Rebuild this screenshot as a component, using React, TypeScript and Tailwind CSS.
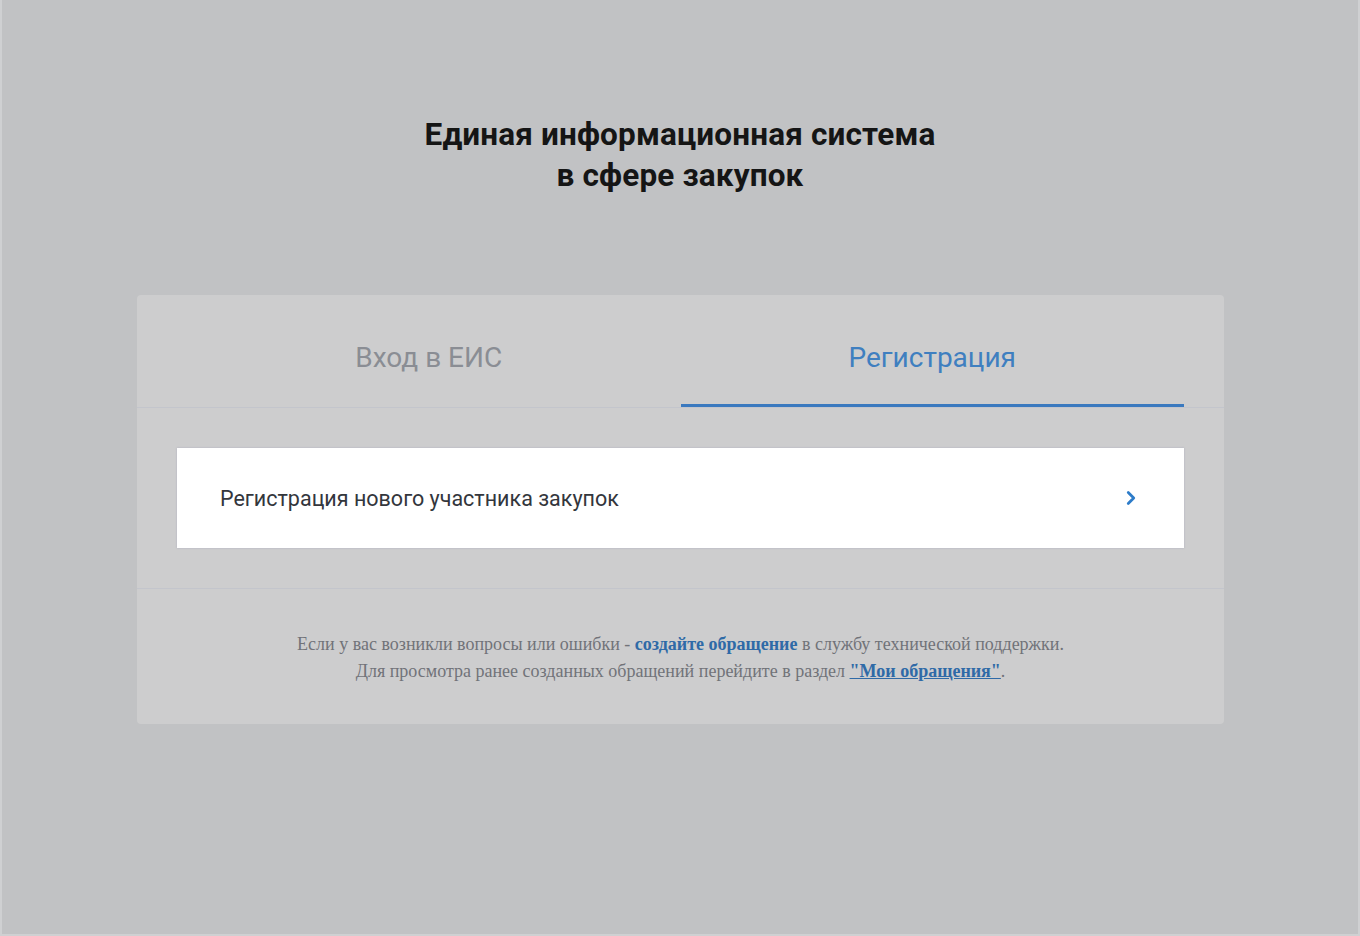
import { ChevronRight } from 'lucide-react';

const App = () => {
  return (
    <div className="min-h-[936px] w-full bg-[#c1c2c4] font-['Roboto',sans-serif] border-l-2 border-b-2 border-r-2 border-[#cfd0d2]">
      <div className="flex flex-col items-center pt-[114px]">
        <h1 className="text-center text-[31.5px] leading-[41px] font-bold text-[#151515] tracking-[0.15px]">
          Единая информационная система
          <br />
          в сфере закупок
        </h1>

        <div className="mt-[99px] w-[1087px] rounded-[4px] bg-[#cdcdce] ml-[1px]">
          {/* Tabs */}
          <div className="border-b border-[#c3c5cc]">
            <div className="flex px-[40px]">
              <button className="flex-1 h-[112px] flex items-center justify-center pt-[14px] text-[28px] text-[#8a8d94]">
                Вход в ЕИС
              </button>
              <button className="flex-1 h-[112px] flex items-center justify-center pt-[17px] text-[28px] text-[#3f7fc0] border-b-[3px] border-[#3a79bf]">
                Регистрация
              </button>
            </div>
          </div>

          {/* Registration options */}
          <div className="px-[40px] pt-[40px] pb-[40px] border-b border-[#c3c5cc]">
            <a
              href="#"
              className="flex items-center justify-between h-[100px] bg-white pl-[43px] pr-[42px] shadow-[0_0_2px_rgba(120,120,160,0.35)]"
            >
              <span className="text-[21.5px] text-[#33363c] pt-[2px]">Регистрация нового участника закупок</span>
              <ChevronRight className="text-[#2d7cc9]" size={22} strokeWidth={3} />
            </a>
          </div>

          {/* Support notice */}
          <div className="flex flex-col items-center pt-[42px] pb-[39px] font-['Liberation_Serif',serif] text-[18px] leading-[27px] text-[#717379]">
            <p>
              Если у вас возникли вопросы или ошибки -{' '}
              <a href="#" className="font-bold text-[#2f6aa7]">создайте обращение</a> в службу технической поддержки.
            </p>
            <p>
              Для просмотра ранее созданных обращений перейдите в раздел{' '}
              <a href="#" className="font-bold text-[#2f6aa7] underline">"Мои обращения"</a>.
            </p>
          </div>
        </div>
      </div>
    </div>
  );
};

export default App;
